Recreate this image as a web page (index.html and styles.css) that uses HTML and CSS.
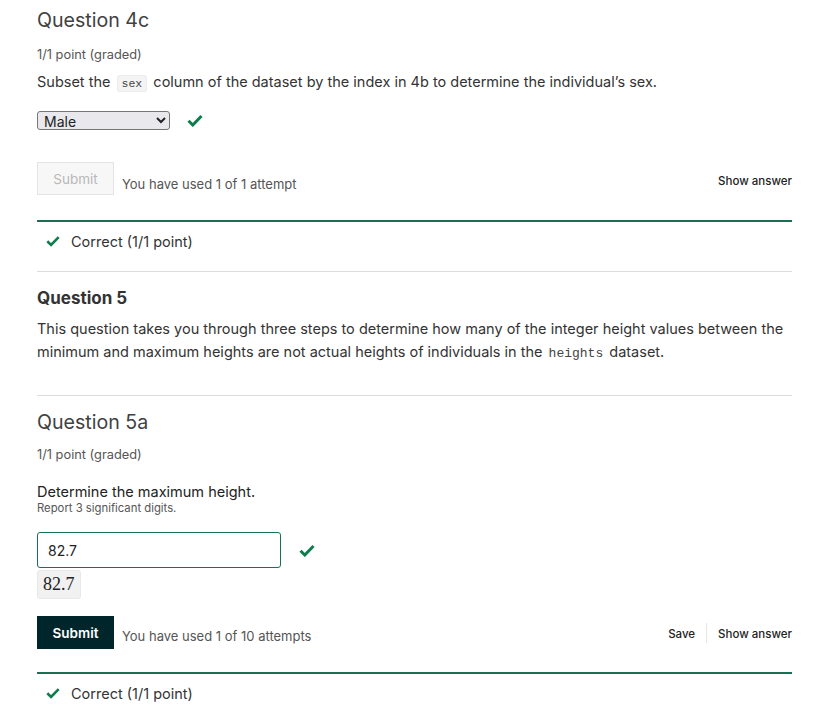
FILE: index.html
```html
<!DOCTYPE html>
<html>
<head>
<meta charset="utf-8">
<link rel="stylesheet" href="styles.css">
</head>
<body>
<div class="page">
  <section class="problem">
    <h2 class="q-title">Question 4c</h2>
    <div class="points">1/1 point (graded)</div>
    <p class="prompt">Subset the <code class="inline">sex</code> column of the dataset by the index in 4b to determine the individual’s sex.</p>
    <div class="answer-row">
      <select class="sel"><option>Male</option></select>
      <svg class="check check-sel" viewBox="0 0 16 13" width="16" height="13"><path d="M1.5 6.8 L5.8 11 L14.5 2" fill="none" stroke="#0d7d4d" stroke-width="3"/></svg>
    </div>
    <div class="actions actions-1">
      <button class="btn btn-disabled">Submit</button>
      <span class="attempts">You have used 1 of 1 attempt</span>
      <span class="spacer"></span>
      <span class="link">Show answer</span>
    </div>
    <div class="notice">
      <svg class="check" viewBox="0 0 16 13" width="14" height="12"><path d="M1.5 6.8 L5.8 11 L14.5 2" fill="none" stroke="#0d7d4d" stroke-width="3"/></svg>
      <span>Correct (1/1 point)</span>
    </div>
  </section>

  <section class="intro">
    <h3 class="q5">Question 5</h3>
    <p class="desc">This question takes you through three steps to determine how many of the integer height values between the minimum and maximum heights are not actual heights of individuals in the <code class="mono">heights</code> dataset.</p>
  </section>

  <section class="problem p2">
    <h2 class="q-title">Question 5a</h2>
    <div class="points">1/1 point (graded)</div>
    <div class="label">Determine the maximum height.</div>
    <div class="hint">Report 3 significant digits.</div>
    <div class="answer-row input-row">
      <input class="txt" type="text" value="82.7">
      <svg class="check check-in" viewBox="0 0 16 13" width="16" height="13"><path d="M1.5 6.8 L5.8 11 L14.5 2" fill="none" stroke="#0d7d4d" stroke-width="3"/></svg>
    </div>
    <div class="preview">82.7</div>
    <div class="actions actions-2">
      <button class="btn btn-dark">Submit</button>
      <span class="attempts">You have used 1 of 10 attempts</span>
      <span class="spacer"></span>
      <span class="link">Save</span>
      <span class="sep"></span>
      <span class="link">Show answer</span>
    </div>
    <div class="notice notice-2">
      <svg class="check" viewBox="0 0 16 13" width="14" height="12"><path d="M1.5 6.8 L5.8 11 L14.5 2" fill="none" stroke="#0d7d4d" stroke-width="3"/></svg>
      <span>Correct (1/1 point)</span>
    </div>
  </section>
</div>
</body>
</html>
```

FILE: styles.css
```css
* { box-sizing: border-box; }
html, body { margin: 0; padding: 0; background: #fff; }
body {
  font-family: Inter, "Noto Sans", "Liberation Sans", sans-serif;
  color: #333;
  font-size: 14.5px;
}
.page {
  width: 755px;
  margin-left: 37px;
  padding-top: 7px;
}
.q-title {
  margin: 0;
  font-size: 19.6px;
  font-weight: 400;
  line-height: 26px;
  color: #414141;
}
.points {
  margin-top: 14px;
  font-size: 12.8px;
  color: #555;
  line-height: 16px;
}
.prompt {
  margin: 9px 0 0;
  font-size: 14.5px;
  line-height: 20px;
  color: #333;
}
code.inline {
  font-family: "Liberation Mono", "DejaVu Sans Mono", monospace;
  font-size: 11.5px;
  background: #f4f4f4;
  border: 1px solid #ececec;
  border-radius: 3px;
  padding: 1px 4px;
  margin: 0 2px;
  color: #444;
}
.answer-row {
  display: flex;
  align-items: center;
  margin-top: 17px;
}
.sel {
  width: 133px;
  height: 19px;
  font-family: Inter, "Liberation Sans", sans-serif;
  font-size: 14px;
  color: #222;
  background: #e9e9ed;
  border: 1px solid #767676;
  border-radius: 3px;
  padding: 0 2px;
}
.check-sel { margin-left: 17px; }
.actions {
  display: flex;
  align-items: center;
}
.actions-1 { margin-top: 35px; }
.btn {
  width: 77px;
  height: 33px;
  font-family: Inter, "Liberation Sans", sans-serif;
  font-size: 13.5px;
  border-radius: 0;
  padding: 0;
}
.btn-disabled {
  background: #f7f7f7;
  border: 1px solid #e4e4e4;
  color: #b8b8b8;
  margin-top: -3px;
}
.btn-dark {
  background: #00262b;
  border: 1px solid #00262b;
  color: #fff;
  font-weight: 600;
}
.attempts {
  margin-left: 8px;
  margin-top: 8px;
  font-size: 13px;
  color: #555;
}
.actions-2 .attempts { margin-top: 6px; }
.spacer { flex: 1; }
.link {
  font-size: 11.5px;
  font-weight: 500;
  color: #222;
  margin-top: 2px;
}
.actions-2 .link { margin-top: 2px; }
.sep {
  width: 1px;
  height: 20px;
  background: #e6e6e6;
  margin: 0 11px;
}
.notice {
  margin-top: 25px;
  border-top: 2px solid #1d6f52;
  display: flex;
  align-items: center;
  padding: 4px 0 0 9px;
  font-size: 14.5px;
  color: #333;
  height: 36px;
}
.notice-2 { margin-top: 23px; }
.notice .check { margin-right: 11px; margin-top: -1px; }
.intro {
  margin-top: 15px;
  border-top: 1px solid #dcdcdc;
  padding-top: 16px;
  border-bottom: 1px solid #dcdcdc;
  padding-bottom: 32px;
}
.q5 {
  margin: 0;
  font-size: 17px;
  font-weight: 700;
  line-height: 20px;
  color: #333;
}
.desc {
  margin: 9px 0 0;
  font-size: 14.5px;
  line-height: 23px;
  color: #333;
}
code.mono {
  font-family: "Liberation Mono", "DejaVu Sans Mono", monospace;
  font-size: 13px;
  line-height: 14px;
  color: #444;
  margin: 0 2px;
}
.p2 { padding-top: 13px; }
.p2 .points { margin-top: 12px; }
.label {
  margin-top: 19px;
  font-size: 14.5px;
  line-height: 19px;
  color: #222;
}
.hint {
  font-size: 11.3px;
  color: #555;
  line-height: 14px;
}
.input-row { margin-top: 17px; }
.txt {
  width: 244px;
  height: 36px;
  border: 1px solid #1d6f52;
  border-radius: 3px;
  padding: 0 10px;
  font-family: Inter, "Liberation Sans", sans-serif;
  font-size: 14px;
  color: #222;
}
.check-in { margin-left: 18px; }
.preview {
  display: inline-block;
  margin-top: 2px;
  padding: 2px 5px;
  background: #f1f1f1;
  border: 1px solid #e8e8e8;
  border-radius: 3px;
  font-family: "Liberation Serif", "DejaVu Serif", serif;
  font-size: 18px;
  line-height: 23px;
  color: #222;
}
.actions-2 { margin-top: 17px; }
```
